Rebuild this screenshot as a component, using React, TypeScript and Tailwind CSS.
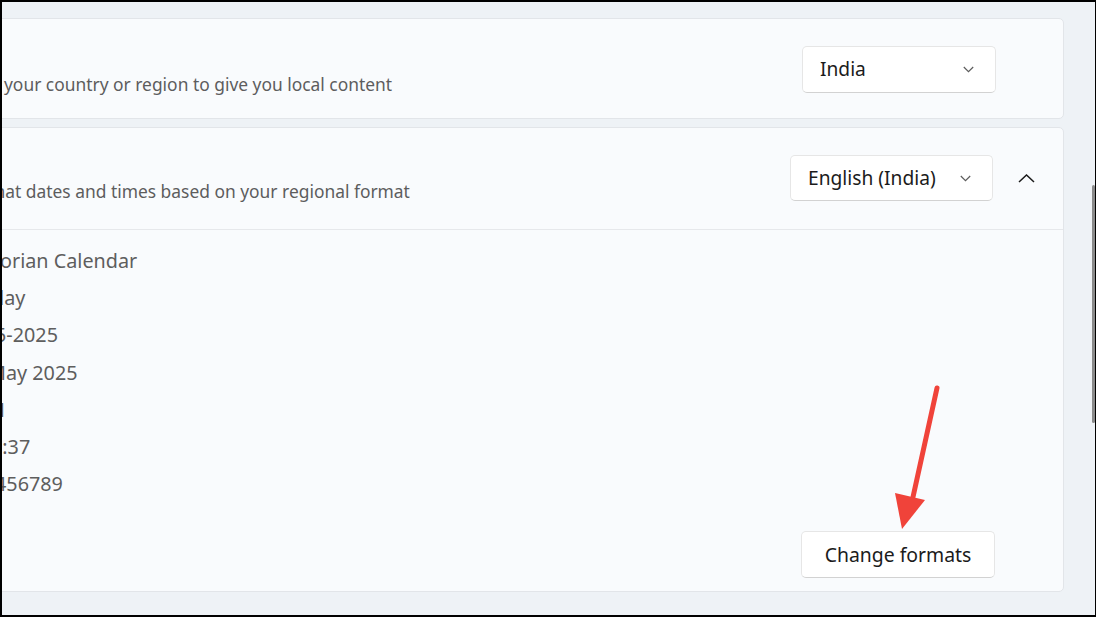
import React from "react";

const font = { fontFamily: '"Noto Sans", "Open Sans", sans-serif' };

function ChevronDown() {
  return (
    <svg width="11" height="7" viewBox="0 0 11 7" fill="none">
      <path d="M0.8 1 L5.5 5.6 L10.2 1" stroke="#5c5c5c" strokeWidth="1.2" />
    </svg>
  );
}

function Dropdown({ label, w, h }: { label: string; w: string; h: string }) {
  return (
    <div
      className={`${w} ${h} bg-white rounded-[5px] border border-[#e6e6e6] border-b-[#d2d2d2] flex items-center justify-between pl-[17px] pr-[21px]`}
    >
      <span className="text-[19.2px] text-[#1b1b1b] leading-none">{label}</span>
      <ChevronDown />
    </div>
  );
}

export default function App() {
  const lines: { t: string; ml: string }[] = [
    { t: "orian Calendar", ml: "ml-[-4px]" },
    { t: "day", ml: "ml-[-12px]" },
    { t: "5-2025", ml: "ml-[-9px]" },
    { t: "May 2025", ml: "ml-[-16px]" },
    { t: "M", ml: "ml-[-17px]" },
    { t: "0:37", ml: "ml-[-13px]" },
    { t: "456789", ml: "ml-[-9px]" },
  ];
  return (
    <div className="w-[1096px] h-[617px] bg-black pt-[2px] pl-[2px] pr-[1px] pb-[2px]" style={font}>
      <div className="relative w-full h-full bg-[#eef2f6] overflow-hidden">
        <div className="flex flex-col gap-[9px] pt-[16px] mr-[31px] -ml-[20px]">
          {/* Card 1 */}
          <div className="h-[101px] bg-[#f9fbfd] border border-[#e2e5e9] rounded-[5px] flex items-start">
            <div className="flex-1 pl-[21px] pt-[53px]">
              <div className="text-[17.4px] leading-[24px] text-[#5d5d5d] whitespace-nowrap">
                your country or region to give you local content
              </div>
            </div>
            <div className="self-center pr-[67px] pt-[1px]">
              <Dropdown label="India" w="w-[194px]" h="h-[47px]" />
            </div>
          </div>

          {/* Card 2 */}
          <div className="bg-[#f9fbfd] border border-[#e2e5e9] rounded-[5px] flex flex-col -mt-[1px]">
            <div className="h-[102px] flex items-start border-b border-[#e6e8eb]">
              <div className="flex-1 pl-[21px] pt-[51px]">
                <div className="text-[17.4px] leading-[24px] text-[#5d5d5d] whitespace-nowrap ml-[-15px]">
                  mat dates and times based on your regional format
                </div>
              </div>
              <div className="self-center flex items-center pr-[13px] pb-[1px]">
                <Dropdown label="English (India)" w="w-[203px]" h="h-[46px]" />
                <div className="w-[48px] h-[32px] ml-[9px] flex items-center justify-center">
                  <svg width="17" height="9" viewBox="0 0 17 9" fill="none">
                    <path d="M1 8 L8.5 1 L16 8" stroke="#1b1b1b" strokeWidth="1.5" />
                  </svg>
                </div>
              </div>
            </div>
            <div className="pt-[12px] pl-[21px] pr-[68px] pb-[13px] flex flex-col">
              {lines.map((l, i) => (
                <div key={i} className={`text-[19.8px] leading-[37.2px] text-[#5e5e5e] whitespace-nowrap ${l.ml}`}>
                  {l.t}
                </div>
              ))}
              <div className="flex justify-end mt-[29px]">
                <div className="w-[194px] h-[47px] bg-white rounded-[5px] border border-[#e6e6e6] border-b-[#d2d2d2] flex items-center justify-center">
                  <span className="text-[19.4px] text-[#1b1b1b] leading-none">Change formats</span>
                </div>
              </div>
            </div>
          </div>
        </div>

        {/* scrollbar */}
        <div className="absolute right-[0px] top-[183px] w-[3px] h-[238px] rounded-full bg-[#8a8a8a]" />

        {/* red arrow annotation */}
        <svg className="absolute left-0 top-0 pointer-events-none" width="1093" height="613" viewBox="0 0 1093 613">
          <line x1="935" y1="386" x2="911" y2="495" stroke="#f0433a" strokeWidth="5" strokeLinecap="round" />
          <polygon points="893,491 923,498 900,527" fill="#f0433a" />
        </svg>
      </div>
    </div>
  );
}
